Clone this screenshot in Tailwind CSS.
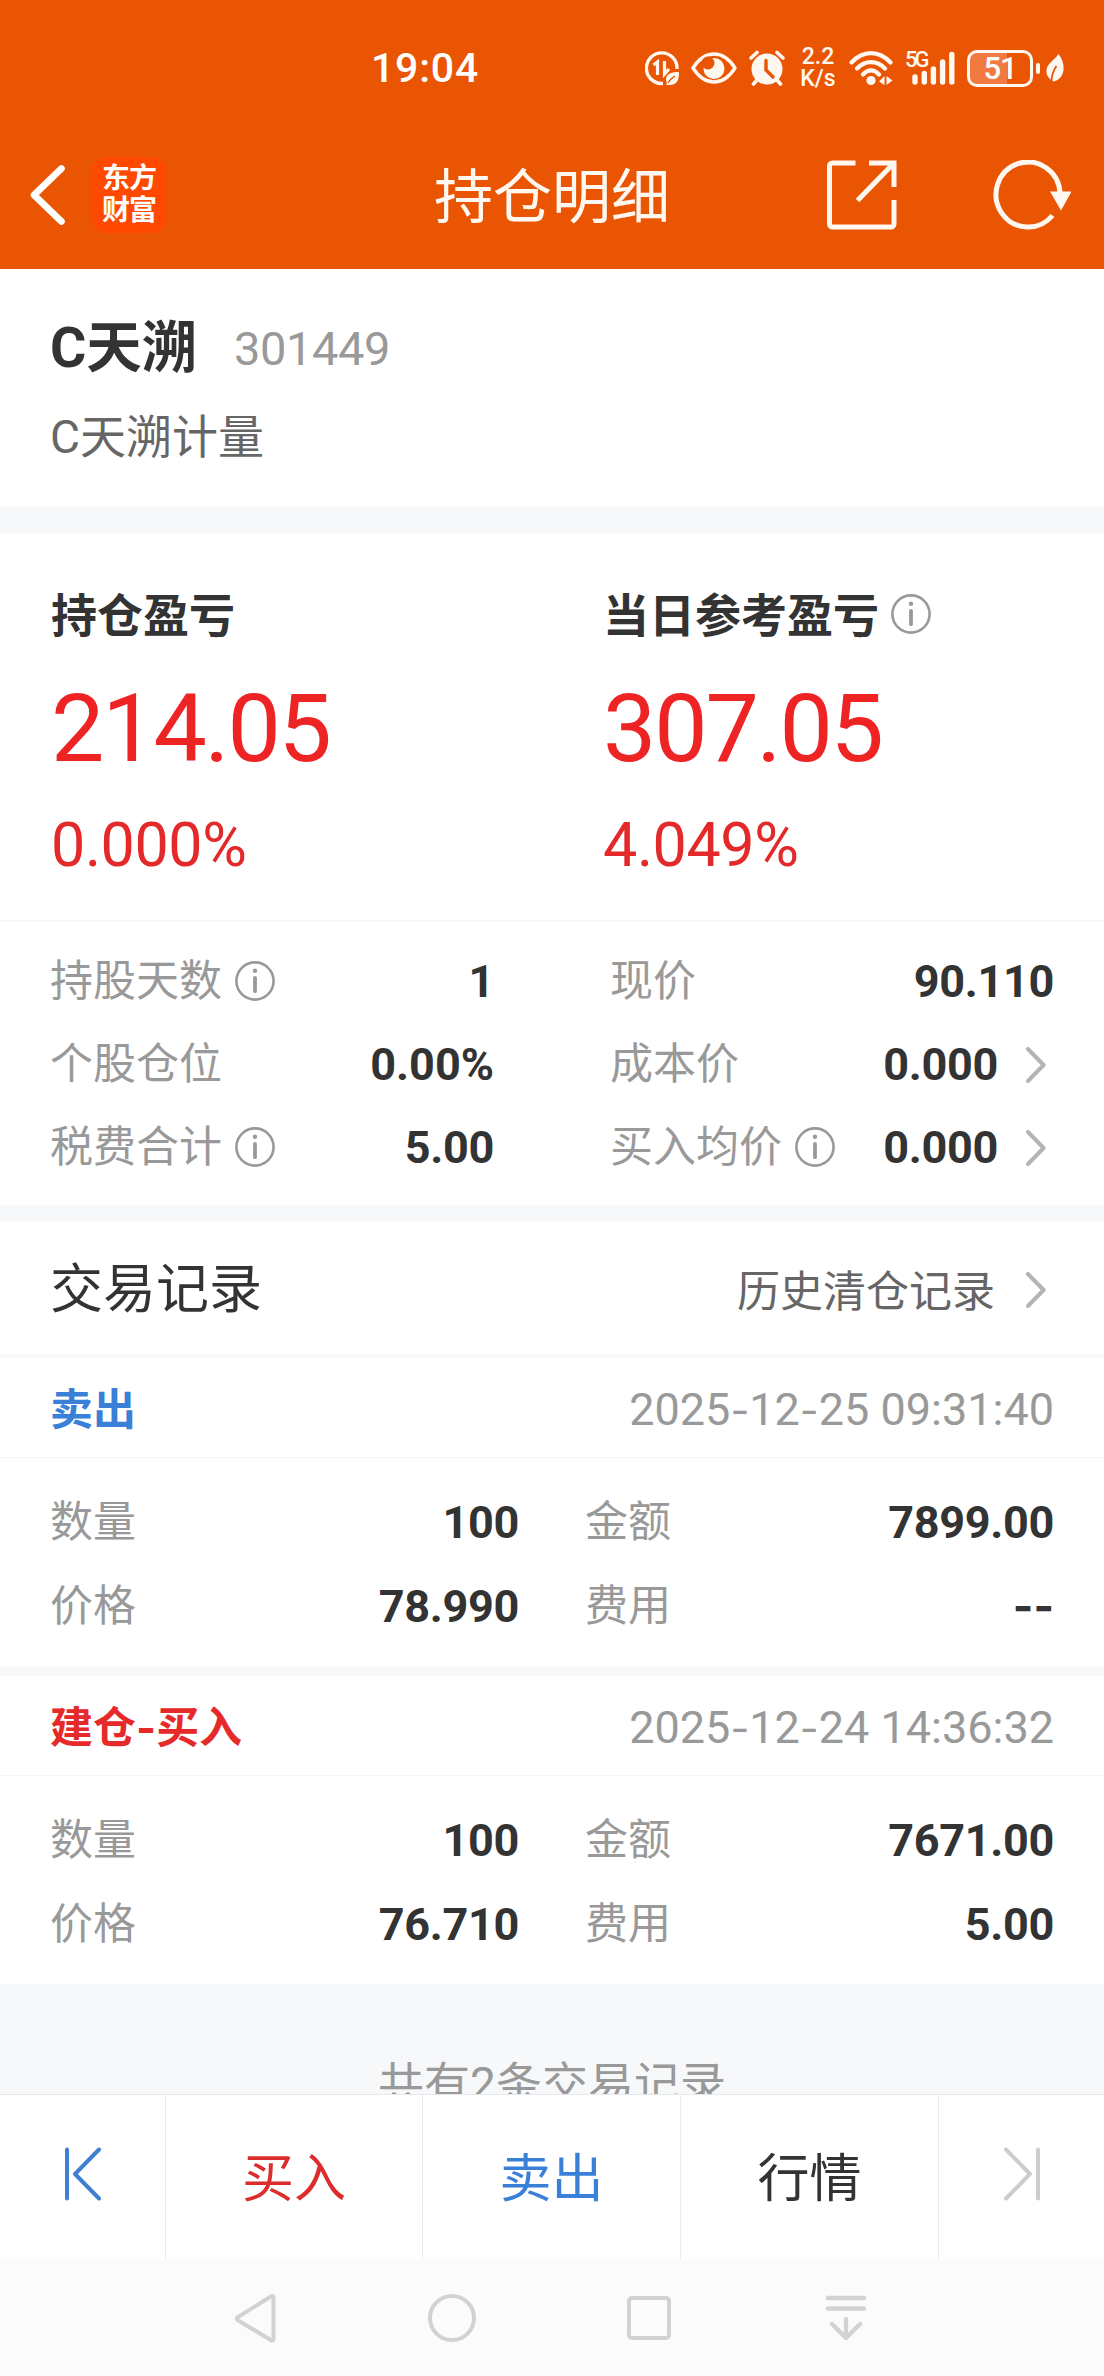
<!DOCTYPE html>
<html lang="zh-CN">
<head>
  <meta charset="UTF-8">
  <meta name="viewport" content="width=device-width, initial-scale=1.0">
  <title>持仓明细</title>
  <script src="https://cdn.jsdelivr.net/npm/@tailwindcss/browser@4"></script>
</head>
<body class="bg-[#f6f8fa] font-['Roboto','Noto_Sans_CJK_SC',sans-serif] text-[#333] leading-none">
  <!-- shared icons -->
  <svg class="hidden">
    <symbol id="info" viewBox="0 0 40 40">
      <circle cx="20" cy="20" r="18.6" fill="none" stroke="#999" stroke-width="2.6"/>
      <circle cx="20" cy="9.8" r="2.2" fill="#999"/>
      <path d="M20 16.8v13.4" stroke="#999" stroke-width="3.8" stroke-linecap="round"/>
    </symbol>
    <symbol id="more" viewBox="0 0 20 36">
      <path d="M2 2l15.6 16L2 34" fill="none" stroke="#b4b4b4" stroke-width="4" stroke-linecap="round" stroke-linejoin="round"/>
    </symbol>
  </svg>

  <div class="w-[1104px] h-[2376px] flex flex-col overflow-hidden">
    <header class="bg-[#ea5504] text-white h-[269px] shrink-0">
      <!-- status bar -->
      <div class="h-[124px] pt-[12px] flex items-center">
        <span class="ml-[371px] w-[274px] text-[41px] font-medium tracking-[0.8px]">19:04</span>
        <svg class="w-[34px] h-[36px]" viewBox="0 0 34 36" fill="none" stroke="#fff8f0">
          <path d="M18 33.4A15.3 15.3 0 1 1 32 19" stroke-width="3.4"/>
          <path d="M8.500 15l4-3v13M19.500 11v13l4.500-5" stroke-width="3.200"/>
          <path d="M34 22c-7 0-13 1-13 8 0 2 1 3 1 3l-1 2h3c9 0 10-6 10-13z" fill="#fff8f0" stroke="none"/>
          <path d="M23 33c2-4 4-5 7-7" stroke="#ea5504" stroke-width="1.300"/>
        </svg>
        <svg class="ml-[12px] w-[46px] h-[32px]" viewBox="0 0 46 32">
          <path d="M2 16C8 6.500 15 2 23 2s15 4.500 21 14C38 25.500 31 30 23 30S8 25.500 2 16z" fill="none" stroke="#fff8f0" stroke-width="3.400" stroke-linejoin="round"/>
          <circle cx="23" cy="16.500" r="10.500" fill="#fff8f0"/>
          <circle cx="17" cy="11" r="6.500" fill="#ea5504"/>
        </svg>
        <svg class="ml-[12px] w-[36px] h-[36px]" viewBox="0 0 36 36">
          <circle cx="18" cy="19" r="15.500" fill="#fff8f0"/>
          <path d="M2 8l6-5.500M34 8l-6-5.500M8 30l-3.500 4M28 30l3.500 4" stroke="#fff8f0" stroke-width="3.600" stroke-linecap="round"/>
          <path d="M17 10.500V20l7 7" fill="none" stroke="#ea5504" stroke-width="3.400" stroke-linecap="round"/>
        </svg>
        <div class="ml-[14px] w-[38px] text-[23px] leading-[22px] font-medium text-center text-[#fff8f0]">2.2<br>K/s</div>
        <svg class="ml-[12px] w-[44px] h-[36px]" viewBox="0 0 44 36" fill="none" stroke="#fff8f0" stroke-width="4.200" stroke-linecap="round">
          <path d="M2.500 12.500C14 0 30 0 41.500 12.500M8 18.500c8-8.500 20-8.500 28 0M14 24.500c5-5.500 11-5.500 16 0"/>
          <circle cx="22" cy="30.500" r="4.600" fill="#fff8f0" stroke="none"/>
          <path d="M35.500 26v9l-5.500-3.500zM37.500 35v-9l6 4.500z" fill="#fff8f0" stroke="none"/>
        </svg>
        <div class="ml-[12px] relative w-[50px] h-[36px]">
          <svg class="w-[50px] h-[36px]" viewBox="0 0 50 36" stroke="#fff8f0" stroke-width="5.400" stroke-linecap="round">
            <path d="M10 27v5M19.300 23.500v8.500M28.400 19v13M37.600 12v20M46.800 4.500v27.500"/>
          </svg>
          <span class="absolute left-0 -top-[1px] text-[22px] font-medium tracking-[-3px] text-[#fff8f0]">5G</span>
        </div>
        <!-- battery -->
        <div class="ml-[12px] w-[66px] h-[37px] rounded-[10px] border-[3px] border-[#fff8f0] bg-linear-to-r from-[#f07a3f] from-[61%] to-transparent to-[61%] flex items-center justify-center text-[31px] font-medium tracking-[-1px]">51</div>
        <div class="ml-[3px] w-[4px] h-[11px] rounded-sm bg-[#fff8f0]"></div>
        <svg class="ml-[6px] w-[18px] h-[30px]" viewBox="0 0 18 30">
          <path d="M12.500 1C17 7 18 12 17.500 17c-.6 6-4.500 10-9.500 11.500C2 26 0 21 .5 17 1 10 9 7 12.500 1z" fill="#fff8f0"/>
          <path d="M5.500 29c0-6 1.500-11 5-16" fill="none" stroke="#ea5504" stroke-width="1.800"/>
        </svg>
      </div>
      <!-- title bar -->
      <div class="h-[142px] flex items-center">
        <svg class="ml-[29px] w-[37px] h-[60px]" viewBox="0 0 37 60" fill="none" stroke="#fff" stroke-width="6.600" stroke-linecap="round" stroke-linejoin="round">
          <path d="M32.500 3.500L5 30l27.500 26.500"/>
        </svg>
        <div class="ml-[26px] w-[74px] h-[76px] rounded-[14px] bg-[#ff4800] text-[28px] leading-[32px] tracking-[-1px] font-bold flex flex-col items-center justify-center">
          <span>东方</span>
          <span>财富</span>
        </div>
        <h1 class="ml-[268px] mt-[4px] w-[393px] text-[59px] text-[#fff8f0]">持仓明细</h1>
        <svg class="w-[70px] h-[70px]" viewBox="0 0 70 70" fill="none" stroke="#fff8f0" stroke-width="5">
          <path d="M28.500 3H5.500a3 3 0 0 0-3 3v58a3 3 0 0 0 3 3h58.500a3 3 0 0 0 3-3V40M42 3h25v24M66 4L30.500 40.500"/>
        </svg>
        <svg class="ml-[96px] w-[78px] h-[70px]" viewBox="0 0 78 70">
          <path d="M59.500 55.500A32 32.500 0 1 1 67 33" fill="none" stroke="#fff8f0" stroke-width="5"/>
          <path d="M57 31.500h21.500L68 50.500z" fill="#fff8f0"/>
        </svg>
      </div>
    </header>

    <!-- stock name -->
    <section class="bg-white h-[238px] shrink-0 px-[50px] pt-[47px]">
      <div class="h-[66px] flex items-center">
        <h2 class="w-[184px] text-[55.500px] font-bold">C天溯</h2>
        <span class="-mt-[2px] text-[47px] tracking-[-0.400px] text-[#999]">301449</span>
      </div>
      <div class="mt-[23px] h-[64px] flex items-center text-[46px] text-[#666]">C天溯计量</div>
    </section>

    <!-- profit -->
    <section class="mt-[26px] bg-white h-[389px] shrink-0 border-b-2 border-[#f6f7f9] pl-[51px] pt-[53px] flex">
      <div class="w-[552px]">
        <div class="h-[60px] flex items-center text-[46px] font-bold">持仓盈亏</div>
        <div class="mt-[30px] h-[104px] flex items-center text-[95px] tracking-[-2.200px] text-[#ee2424]">214.05</div>
        <div class="mt-[30px] h-[70px] flex items-center text-[61px] tracking-[-0.400px] text-[#e32929]">0.000%</div>
      </div>
      <div>
        <div class="h-[60px] flex items-center text-[46px] font-bold">当日参考盈亏
          <svg class="ml-[12px] -mt-[4px] w-[40px] h-[40px]"><use href="#info"/></svg>
        </div>
        <div class="mt-[30px] h-[104px] flex items-center text-[95px] tracking-[-2.200px] text-[#ee2424]">307.05</div>
        <div class="mt-[30px] h-[70px] flex items-center text-[61px] tracking-[-0.400px] text-[#e32929]">4.049%</div>
      </div>
    </section>

    <!-- position details -->
    <section class="bg-white h-[283px] shrink-0 pl-[50px] pr-[50px] pt-[18px] flex justify-between text-[43px]">
      <div class="w-[444px]">
        <div class="h-[83px] flex items-center">
          <span class="text-[#999]">持股天数</span>
          <svg class="ml-[13px] -mt-[2px] w-[40px] h-[40px]"><use href="#info"/></svg>
          <span class="ml-auto text-[45px] tracking-[-0.300px] font-bold">1</span>
        </div>
        <div class="h-[83px] flex items-center">
          <span class="text-[#999]">个股仓位</span>
          <span class="ml-auto text-[45px] font-bold">0.00%</span>
        </div>
        <div class="h-[83px] flex items-center">
          <span class="text-[#999]">税费合计</span>
          <svg class="ml-[13px] -mt-[2px] w-[40px] h-[40px]"><use href="#info"/></svg>
          <span class="ml-auto text-[45px] tracking-[-0.300px] font-bold">5.00</span>
        </div>
      </div>
      <div class="w-[444px]">
        <div class="h-[83px] flex items-center">
          <span class="text-[#999]">现价</span>
          <span class="ml-auto text-[45px] tracking-[-0.300px] font-bold">90.110</span>
        </div>
        <div class="h-[83px] flex items-center">
          <span class="text-[#999]">成本价</span>
          <span class="ml-auto text-[45px] tracking-[-0.300px] font-bold">0.000</span>
          <svg class="ml-[28px] mr-[8px] w-[20px] h-[36px]"><use href="#more"/></svg>
        </div>
        <div class="h-[83px] flex items-center">
          <span class="text-[#999]">买入均价</span>
          <svg class="ml-[13px] -mt-[2px] w-[40px] h-[40px]"><use href="#info"/></svg>
          <span class="ml-auto text-[45px] tracking-[-0.300px] font-bold">0.000</span>
          <svg class="ml-[28px] mr-[8px] w-[20px] h-[36px]"><use href="#more"/></svg>
        </div>
      </div>
    </section>

    <!-- trade records -->
    <section class="mt-[17px] bg-white h-[136px] shrink-0 border-b-4 border-[#f6f7f9] pl-[50px] pr-[58px] flex items-center">
      <h3 class="mt-[5px] text-[53px]">交易记录</h3>
      <span class="ml-auto mt-[8px] text-[43px] text-[#666]">历史清仓记录</span>
      <svg class="ml-[31px] mt-[4px] w-[20px] h-[36px]"><use href="#more"/></svg>
    </section>

    <section class="bg-white h-[308px] shrink-0">
      <div class="h-[100px] pt-[3px] border-b border-[#f4f5f7] pl-[50px] pr-[50px] flex items-center justify-between">
        <span class="mt-[2px] text-[43px] font-bold text-[#3a7fd8]">卖出</span>
        <span class="text-[45px] text-[#999]">2025<span class="font-[Inter] text-[41px]">-</span>12<span class="font-[Inter] text-[41px]">-</span>25 09:31:40</span>
      </div>
      <div class="pt-[22px] pl-[50px] pr-[50px] flex justify-between text-[43px]">
        <div class="w-[469px]">
          <div class="h-[84px] flex items-center justify-between"><span class="text-[#999]">数量</span><span class="text-[45px] tracking-[-0.300px] font-bold">100</span></div>
          <div class="h-[84px] flex items-center justify-between"><span class="text-[#999]">价格</span><span class="text-[45px] tracking-[-0.300px] font-bold">78.990</span></div>
        </div>
        <div class="w-[469px]">
          <div class="h-[84px] flex items-center justify-between"><span class="text-[#999]">金额</span><span class="text-[45px] tracking-[-0.300px] font-bold">7899.00</span></div>
          <div class="h-[84px] flex items-center justify-between"><span class="text-[#999]">费用</span><span class="font-[Inter] text-[44px] font-bold">--</span></div>
        </div>
      </div>
    </section>

    <section class="mt-[10px] bg-white h-[308px] shrink-0">
      <div class="h-[100px] pt-[3px] border-b border-[#f4f5f7] pl-[50px] pr-[50px] flex items-center justify-between">
        <span class="mt-[2px] text-[43px] font-bold text-[#e62a2a]">建仓<span class="font-[Inter]">-</span>买入</span>
        <span class="text-[45px] text-[#999]">2025<span class="font-[Inter] text-[41px]">-</span>12<span class="font-[Inter] text-[41px]">-</span>24 14:36:32</span>
      </div>
      <div class="pt-[22px] pl-[50px] pr-[50px] flex justify-between text-[43px]">
        <div class="w-[469px]">
          <div class="h-[84px] flex items-center justify-between"><span class="text-[#999]">数量</span><span class="text-[45px] tracking-[-0.300px] font-bold">100</span></div>
          <div class="h-[84px] flex items-center justify-between"><span class="text-[#999]">价格</span><span class="text-[45px] tracking-[-0.300px] font-bold">76.710</span></div>
        </div>
        <div class="w-[469px]">
          <div class="h-[84px] flex items-center justify-between"><span class="text-[#999]">金额</span><span class="text-[45px] tracking-[-0.300px] font-bold">7671.00</span></div>
          <div class="h-[84px] flex items-center justify-between"><span class="text-[#999]">费用</span><span class="text-[45px] tracking-[-0.300px] font-bold">5.00</span></div>
        </div>
      </div>
    </section>

    <!-- record count, cut off by the bottom bar -->
    <div class="h-[110px] shrink-0 pt-[77px] overflow-hidden text-center text-[46px] text-[#999]">共有2条交易记录</div>

    <!-- bottom bar -->
    <nav class="h-[165px] shrink-0 bg-white border-t border-[#e8e8e8] flex text-[52px]">
      <div class="w-[166px] border-r border-[#ececec] flex items-center justify-center">
        <svg class="-mt-[6px] w-[38px] h-[54px]" viewBox="0 0 38 54" fill="none" stroke="#3f80d2" stroke-width="4" stroke-linecap="round" stroke-linejoin="round">
          <path d="M3 2.500v49M35 2.500L11 27l24 24.500"/>
        </svg>
      </div>
      <div class="w-[257px] pt-[5px] border-r border-[#ececec] flex items-center justify-center text-[#dd2c2c]">买入</div>
      <div class="w-[258px] pt-[5px] border-r border-[#ececec] flex items-center justify-center text-[#3a7fd8]">卖出</div>
      <div class="w-[258px] pt-[5px] border-r border-[#ececec] flex items-center justify-center">行情</div>
      <div class="w-[165px] flex items-center justify-center">
        <svg class="-mt-[6px] w-[38px] h-[54px]" viewBox="0 0 38 54" fill="none" stroke="#ccc" stroke-width="4" stroke-linecap="round" stroke-linejoin="round">
          <path d="M35 2.500v49M3 2.500L27 27L3 51.500"/>
        </svg>
      </div>
    </nav>

    <!-- system navigation -->
    <div class="h-[117px] shrink-0 bg-[#fbfbfb] flex items-center pl-[233px]">
      <svg class="w-[44px] h-[52px]" viewBox="0 0 44 52" fill="none" stroke="#d2d2d2" stroke-width="4" stroke-linejoin="round">
        <path d="M40.500 5.500v41.500a1.500 1.500 0 0 1-2.300 1.300L4.500 28a1.500 1.500 0 0 1 0-2.600L38.200 4.200a1.500 1.500 0 0 1 2.300 1.300z"/>
      </svg>
      <svg class="ml-[151px] w-[48px] h-[48px]" viewBox="0 0 48 48" fill="none" stroke="#d2d2d2" stroke-width="4">
        <circle cx="24" cy="24" r="22"/>
      </svg>
      <div class="ml-[151px] w-[44px] h-[44px] rounded-[5px] border-4 border-[#d2d2d2]"></div>
      <svg class="ml-[154px] w-[42px] h-[46px]" viewBox="0 0 42 46" fill="none" stroke="#d2d2d2" stroke-width="4.400" stroke-linecap="round" stroke-linejoin="round">
        <path d="M3 3h36M3 13.500h36M21 24v19M7 29l14 14 14-14"/>
      </svg>
    </div>
  </div>
</body>
</html>
